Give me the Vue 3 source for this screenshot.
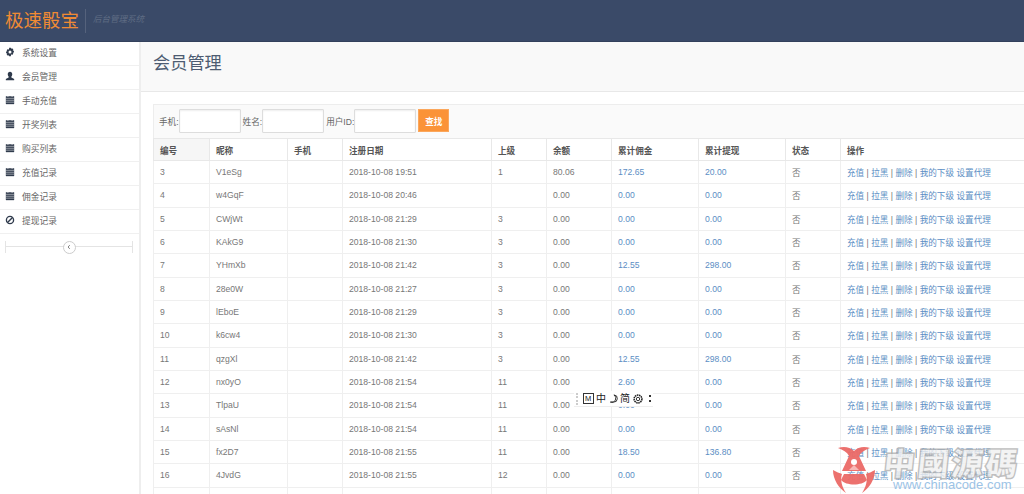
<template>
  <div class="app">
    <header class="navbar">
      <span class="logo">极速骰宝</span>
      <span class="slogan">后台管理系统</span>
    </header>

    <div class="layout">
      <aside class="sidebar">
        <ul class="menu">
          <li v-for="item in menu" :key="item.text" class="menu-item">
            <svg class="menu-icon" viewBox="0 0 12 12" v-html="icons[item.icon]"></svg>
            <span>{{ item.text }}</span>
          </li>
        </ul>
        <div class="collapse-bar">
          <span class="collapse-btn">
            <svg viewBox="0 0 8 8" width="6" height="6"><path d="M5 1.5 2.8 4 5 6.5" fill="none" stroke="#555" stroke-width="1"/></svg>
          </span>
        </div>
      </aside>

      <main class="main">
        <div class="page-header"><h1>会员管理</h1></div>
        <div class="content">
          <form class="search-bar" @submit.prevent>
            <label>手机:</label><input class="search-input" />
            <label>姓名:</label><input class="search-input" />
            <label>用户ID:</label><input class="search-input" />
            <button class="search-btn">查找</button>
          </form>
          <table class="member-table">
            <colgroup>
              <col v-for="w in colWidths" :key="w.id" :style="{ width: w.px + 'px' }" />
            </colgroup>
            <thead>
              <tr>
                <th v-for="h in headers" :key="h">{{ h }}</th>
              </tr>
            </thead>
            <tbody>
              <tr v-for="row in rows" :key="row[0]">
                <td>{{ row[0] }}</td>
                <td>{{ row[1] }}</td>
                <td></td>
                <td>2018-10-08 {{ row[2] }}</td>
                <td>{{ row[3] }}</td>
                <td>{{ row[4] }}</td>
                <td><a>{{ row[5] }}</a></td>
                <td><a>{{ row[6] }}</a></td>
                <td>否</td>
                <td class="actions"><a>充值</a> | <a>拉黑</a> | <a>删除</a> | <a>我的下级</a> <a>设置代理</a></td>
              </tr>
              <tr class="blank"><td v-for="n in 10" :key="n"></td></tr>
            </tbody>
          </table>
        </div>
      </main>
    </div>

    <!-- 输入法工具条 -->
    <div class="ime-bar">
      <span class="ime-handle"></span>
      <span class="ime-m">M</span>
      <span>中</span>
      <svg viewBox="0 0 10 10" width="9" height="9"><path d="M5.5 1a4 4 0 0 1-.5 8H1.500A4.500 4.500 0 0 0 5.500 1Z" fill="none" stroke="#222" stroke-width="1"/></svg>
      <span>简</span>
      <svg viewBox="0 0 10 10" width="10" height="10"><circle cx="5" cy="5" r="3.900" fill="none" stroke="#222" stroke-width="1.500" stroke-dasharray="1.500 .6"/><circle cx="5" cy="5" r="1.700" fill="none" stroke="#222" stroke-width=".9"/></svg>
      <span class="ime-more"></span>
    </div>

    <!-- 水印 -->
    <div class="watermark">
      <svg class="wm-logo" viewBox="0 0 48 50">
        <g fill="#ec6a67">
          <path d="M9 4C15 2 21 3 25 7 29 3 35 2 41 4 36 6 32 8 30 12L37 27H13L20 12C18 8 14 6 9 4Z"/>
          <path d="M4 26C4 36 10 44 17 49 13 43 11 36 13 30 11 29 7 28 4 26ZM46 26C46 36 40 44 33 49 37 43 39 36 37 30 39 29 43 28 46 26Z"/>
          <path d="M15 30H35L38 36C33 42 17 42 12 36Z"/>
        </g>
        <circle cx="25" cy="18" r="3" fill="#fff"/>
        <path d="M20 26 25 21 30 26Z" fill="#f7b5b3"/>
      </svg>
      <div class="wm-text">
        <div class="wm-title">中國源碼</div>
        <div class="wm-url">www.chinacode.com</div>
      </div>
    </div>
  </div>
</template>

<script setup>
const icons = {
  gear: '<path fill="#2f3a4c" fill-rule="evenodd" d="M5 .8h2l.3 1.400 1.200-.7 1.500 1.500-.7 1.200 1.400.3v2l-1.400.3.7 1.200-1.500 1.500-1.200-.7L7 11.200H5l-.3-1.400-1.200.7L2 9l.7-1.200L1.300 7.500v-2l1.400-.3L2 4l1.500-1.500 1.200.7ZM6 4.200a1.800 1.800 0 1 0 0 3.600 1.800 1.800 0 0 0 0-3.600Z"/>',
  user: '<path fill="#2f3a4c" d="M6 .8c1.700 0 2.700 1.200 2.700 3 0 1.400-.6 2.500-1.300 3.100l.3 1L11 9.500V11.200H1V9.500l3.300-1.600.3-1C3.900 6.300 3.300 5.200 3.300 3.800c0-1.800 1-3 2.700-3Z"/>',
  cal: '<path fill="#2f3a4c" d="M1 1.500h10v9.500H1Z"/><path stroke="#fff" stroke-width=".6" d="M1 4h10M1 6.300h10M1 8.600h10"/><path stroke="#fff" stroke-width=".8" d="M3.500 .8v1.500M8.500 .8v1.500"/>',
  ban: '<circle cx="6" cy="6" r="4.300" fill="none" stroke="#2f3a4c" stroke-width="1.600"/><path d="M3 9 9 3" stroke="#2f3a4c" stroke-width="1.600"/>'
}

const menu = [
  { text: '系统设置', icon: 'gear' },
  { text: '会员管理', icon: 'user' },
  { text: '手动充值', icon: 'cal' },
  { text: '开奖列表', icon: 'cal' },
  { text: '购买列表', icon: 'cal' },
  { text: '充值记录', icon: 'cal' },
  { text: '佣金记录', icon: 'cal' },
  { text: '提现记录', icon: 'ban' }
]

const headers = ['编号', '昵称', '手机', '注册日期', '上级', '余额', '累计佣金', '累计提现', '状态', '操作']
const colWidths = [56, 78, 55, 149, 55, 65, 87, 87, 55, 184].map((px, id) => ({ id, px }))

const rows = [
  [3, 'V1eSg', '19:51', '1', '80.06', '172.65', '20.00'],
  [4, 'w4GqF', '20:46', '', '0.00', '0.00', '0.00'],
  [5, 'CWjWt', '21:29', '3', '0.00', '0.00', '0.00'],
  [6, 'KAkG9', '21:30', '3', '0.00', '0.00', '0.00'],
  [7, 'YHmXb', '21:42', '3', '0.00', '12.55', '298.00'],
  [8, '28e0W', '21:27', '3', '0.00', '0.00', '0.00'],
  [9, 'lEboE', '21:29', '3', '0.00', '0.00', '0.00'],
  [10, 'k6cw4', '21:30', '3', '0.00', '0.00', '0.00'],
  [11, 'qzgXl', '21:42', '3', '0.00', '12.55', '298.00'],
  [12, 'nx0yO', '21:54', '11', '0.00', '2.60', '0.00'],
  [13, 'TlpaU', '21:54', '11', '0.00', '0.00', '0.00'],
  [14, 'sAsNl', '21:54', '11', '0.00', '0.00', '0.00'],
  [15, 'fx2D7', '21:55', '11', '0.00', '18.50', '136.80'],
  [16, '4JvdG', '21:55', '12', '0.00', '0.00', '0.00']
]
</script>

<style>
html, body {
  margin: 0;
  overflow: hidden;
}
</style>

<style scoped>
.app {
  position: relative;
  height: 100vh;
  overflow: hidden;
  background: #fff;
  font-family: "Liberation Sans", "Noto Sans CJK SC", sans-serif;
  font-size: 8.6px;
  color: #777;
}

.navbar {
  display: flex;
  align-items: center;
  height: 42px;
  padding-left: 5px;
  box-sizing: border-box;
  background: #3a4a68;
  border-bottom: 1px solid #33415c;
}

.logo {
  font-size: 18.5px;
  color: #f08a34;
  padding-right: 6px;
  line-height: 26px;
}

.slogan {
  border-left: 1px solid #55627c;
  padding: 3px 0 9px 7px;
  font-size: 8.5px;
  font-style: italic;
  color: #5f6c84;
}

.layout {
  display: flex;
  height: calc(100% - 42px);
}

.sidebar {
  width: 139px;
  flex: none;
  border-right: 2px solid #eee;
}

.menu {
  list-style: none;
  margin: 0;
  padding: 0;
}

.menu-item {
  display: flex;
  align-items: center;
  gap: 7px;
  height: 24px;
  box-sizing: border-box;
  padding: 0 0 2px 5px;
  border-bottom: 1px solid #f0f0f0;
  font-size: 8.75px;
  color: #666;
}

.menu-icon {
  width: 10px;
  height: 10px;
  flex: none;
  margin-top: -1px;
}

.collapse-bar {
  position: relative;
  height: 12px;
  margin: 7px 6px 0 5px;
  border-left: 1px solid #e4e4e4;
  border-right: 1px solid #e4e4e4;
  display: flex;
  align-items: center;
  justify-content: center;
}

.collapse-bar::before {
  content: "";
  position: absolute;
  left: 0;
  right: 0;
  top: 5px;
  border-top: 1px solid #e4e4e4;
}

.collapse-btn {
  position: relative;
  width: 11px;
  height: 11px;
  border: 1px solid #ccc;
  border-radius: 50%;
  background: #fff;
  display: flex;
  align-items: center;
  justify-content: center;
}

.main {
  flex: 1;
  min-width: 0;
}

.page-header {
  height: 50px;
  box-sizing: border-box;
  padding: 9px 12px;
  background: #f9f9f9;
  border-bottom: 1px solid #e8e8e8;
}

.page-header h1 {
  margin: 0;
  font-size: 17.2px;
  line-height: 24px;
  font-weight: 400;
  color: #4d5c72;
}

.content {
  padding: 12px 0 0 12px;
}

.search-bar {
  display: flex;
  align-items: center;
  height: 34px;
  box-sizing: border-box;
  padding: 0 0 2px 5px;
  background: #fafafa;
  border: 1px solid #ededed;
  border-right: 0;
  border-bottom: 0;
  font-size: 8.6px;
  color: #666;
}

.search-input {
  width: 62px;
  height: 24px;
  box-sizing: border-box;
  margin: 0 2px 0 0;
  padding: 0;
  background: #fff;
  border: 1px solid #ddd;
  border-radius: 1px;
  box-shadow: inset 0 1px 2px #eee;
}

.search-btn {
  width: 31px;
  height: 23px;
  margin-left: 0;
  padding: 0;
  background: #fb9337;
  border: 1px solid #fba75c;
  color: #fff;
  font: inherit;
  font-weight: 700;
}

.member-table {
  width: 871px;
  table-layout: fixed;
  border-collapse: collapse;
  color: #777;
}

.member-table th,
.member-table td {
  height: 23.33px;
  box-sizing: border-box;
  padding: 0 6px;
  border: 1px solid #efefef;
  text-align: left;
  white-space: nowrap;
  overflow: hidden;
  font-size: 8.6px;
}

.member-table th {
  height: 22px;
  font-weight: 700;
  color: #555;
  background: #fff;
  border-color: #e8e8e8;
}

.member-table th:first-child {
  background: #f6f6f6;
}

.member-table a {
  color: #5b8ec4;
}

.ime-bar {
  position: absolute;
  left: 574px;
  top: 391px;
  width: 79px;
  height: 15px;
  display: flex;
  align-items: center;
  gap: 2.5px;
  background: #fff;
  border-bottom: 1px solid #eee;
  font-size: 10px;
  line-height: 12px;
  color: #222;
}

.ime-handle {
  width: 0;
  height: 12px;
  margin: 0 2px 0 2px;
  border-left: 2px dotted #ccc;
}

.ime-m {
  width: 9px;
  height: 9px;
  border: 1px solid #333;
  font-size: 7.500px;
  line-height: 9px;
  text-align: center;
}

.ime-more {
  width: 2px;
  height: 7px;
  margin-left: 4px;
  border-top: 2px solid #333;
  border-bottom: 2px solid #333;
  box-sizing: border-box;
}

.watermark {
  position: absolute;
  left: 829px;
  top: 444px;
  display: flex;
  gap: 7px;
  pointer-events: none;
}

.wm-logo {
  width: 48px;
  height: 50px;
  opacity: .95;
}

.wm-title {
  font-size: 31px;
  line-height: 36px;
  letter-spacing: 3px;
  font-weight: 700;
  color: #f1f1f1;
  -webkit-text-stroke: 3px #b0b0b0;
  paint-order: stroke fill;
  opacity: .8;
  transform: skewX(-6deg);
  white-space: nowrap;
  font-family: "Noto Sans CJK TC", "Noto Sans CJK SC", sans-serif;
}

.wm-url {
  margin: -2px 0 0 9px;
  font-size: 13px;
  line-height: 14px;
  color: #9cc3e6;
  white-space: nowrap;
}
</style>
